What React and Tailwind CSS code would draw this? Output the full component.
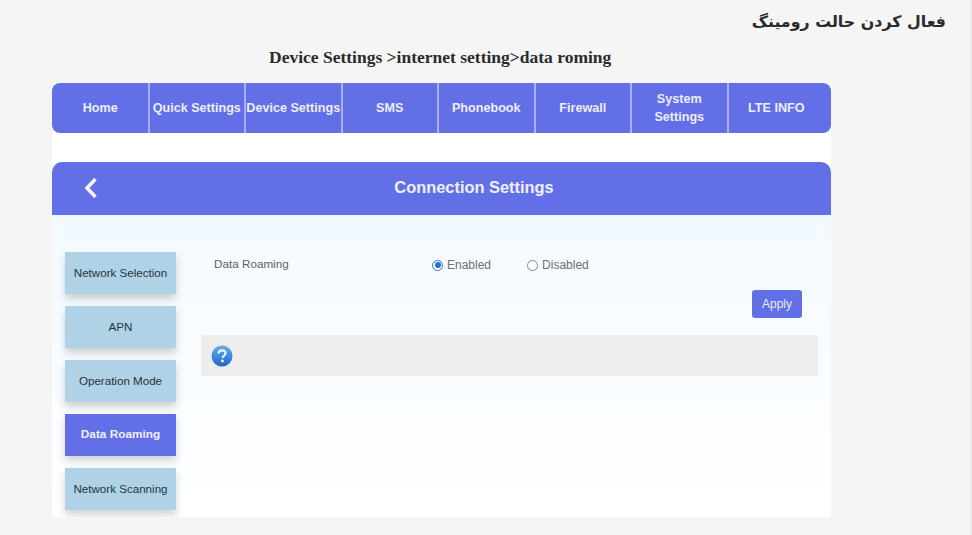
const NAV = ["Home", "Quick Settings", "Device Settings", "SMS", "Phonebook", "Firewall", "System Settings", "LTE INFO"];
const SIDE = ["Network Selection", "APN", "Operation Mode", "Data Roaming", "Network Scanning"];

function Help() {
  return (
    <svg width="22" height="22" viewBox="0 0 22 22" className="shrink-0">
      <defs>
        <linearGradient id="q" x1="0" y1="0" x2="0" y2="1">
          <stop offset="0" stopColor="#62aef0" />
          <stop offset="1" stopColor="#1c69c4" />
        </linearGradient>
      </defs>
      <circle cx="11" cy="11" r="10.5" fill="url(#q)" />
      <path d="M7.6 8.6c0-2 1.5-3.2 3.5-3.2s3.4 1.1 3.4 2.9c0 2.4-2.9 2.4-2.9 4.6" fill="none" stroke="#f2f7fd" strokeWidth="2.1" />
      <circle cx="11.5" cy="16" r="1.4" fill="#f2f7fd" />
    </svg>
  );
}

function Radio({ checked, label }) {
  return (
    <div className="flex items-center gap-[4px]">
      {checked ? (
        <span className="flex h-[11px] w-[11px] items-center justify-center rounded-full border border-[#2f76d2] bg-white">
          <span className="h-[6px] w-[6px] rounded-full bg-[#1f6fd6]" />
        </span>
      ) : (
        <span className="h-[11px] w-[11px] rounded-full border border-[#858585] bg-white" />
      )}
      <span className="text-[12px] leading-none text-[#707070]">{label}</span>
    </div>
  );
}

export default function App() {
  return (
    <div className="flex h-[535px] w-[972px] flex-col overflow-hidden border-r border-r-[#e4e4e4] bg-[#f5f5f5] font-['Liberation_Sans',sans-serif]">
      <h2 dir="rtl" className="mt-[10px] pr-[25px] font-['DejaVu_Sans',sans-serif] text-[15.85px] font-bold leading-[24px] text-[#2b2b2b]">
        فعال کردن حالت رومینگ
      </h2>
      <p className="mt-[11px] pl-[269px] font-['Liberation_Serif',serif] text-[17.5px] font-bold leading-[24px] text-[#2b2b2b]">
        Device Settings &gt;internet setting&gt;data roming
      </p>

      <div className="ml-[52px] mt-[14px] flex w-[779px] flex-col bg-white">
        <nav className="flex h-[50px] overflow-hidden rounded-[8px] bg-[#636fe6] pl-[1px]">
          {NAV.map((n, i) => (
            <div
              key={n}
              className={
                i === 7
                  ? "flex flex-1 items-center justify-center pr-[7px] text-center text-[12.6px] font-bold leading-[18px] text-[#eceefc]"
                  : "flex w-[96.5px] items-center justify-center border-r-2 border-r-[#a9b0ef] text-center text-[12.6px] font-bold leading-[18px] text-[#eceefc]"
              }
            >
              <span className={n === "System Settings" ? "w-[60px]" : "whitespace-nowrap"}>{n}</span>
            </div>
          ))}
        </nav>

        <div className="h-[29px]" />

        <header className="relative flex h-[53px] items-center justify-center rounded-t-[10px] bg-[#636fe6] pl-[65px] pb-[3px]">
          <svg width="16" height="22" viewBox="0 0 16 22" className="absolute left-[31px] top-[15px]">
            <path d="M12.5 2 L4 11 L12.5 20" fill="none" stroke="#f4f5fe" strokeWidth="3.6" />
          </svg>
          <span className="text-[16.4px] font-bold leading-none text-[#eef0fd]">Connection Settings</span>
        </header>

        <main className="flex h-[302px] overflow-hidden bg-gradient-to-b from-[#f3faff] to-white pl-[13px] pt-[37px]">
          <aside className="flex w-[111px] shrink-0 flex-col gap-[12.5px]">
            {SIDE.map((s) => (
              <div
                key={s}
                className={
                  s === "Data Roaming"
                    ? "flex h-[41.5px] items-center justify-center bg-[#636fe6] text-[11.8px] font-bold text-[#eef0fd] shadow-[0_5px_8px_rgba(0,0,0,0.18)]"
                    : "flex h-[41.5px] items-center justify-center bg-[#b0d2e6] text-[11.6px] text-[#26323c] shadow-[0_5px_8px_rgba(0,0,0,0.18)]"
                }
              >
                {s}
              </div>
            ))}
          </aside>

          <section className="ml-[25px] flex w-[617px] flex-col">
            <div className="flex h-[26px] items-center pl-[13px]">
              <span className="-mt-[3px] w-[218px] text-[11.7px] text-[#606060]">Data Roaming</span>
              <div className="flex gap-[36px]">
                <Radio checked label="Enabled" />
                <Radio label="Disabled" />
              </div>
            </div>
            <div className="mt-[12px] flex justify-end pr-[16px]">
              <button className="h-[28px] w-[50px] rounded-[3px] bg-[#636fe6] text-[12px] text-[#e9ebfc]">Apply</button>
            </div>
            <div className="mt-[17px] flex h-[41px] items-center rounded-[3px] bg-[#ededed] pl-[10px]">
              <Help />
            </div>
          </section>
        </main>
      </div>
    </div>
  );
}
